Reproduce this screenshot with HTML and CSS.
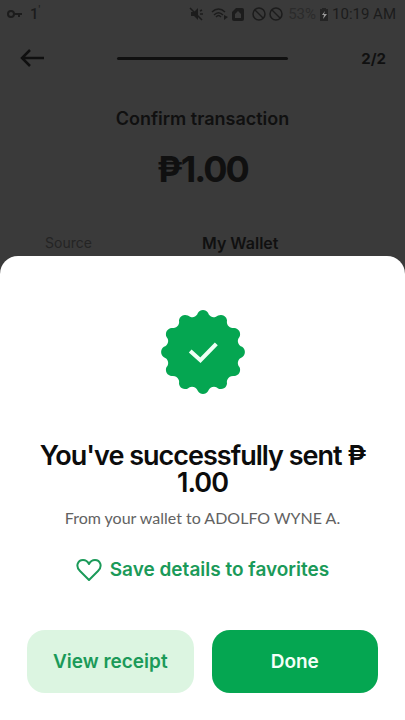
FILE: index.html
```html
<!DOCTYPE html>
<html lang="en">
<head>
<meta charset="utf-8">
<meta name="viewport" content="width=device-width, initial-scale=1">
<title>Confirm transaction</title>
<link rel="stylesheet" href="styles.css">
</head>
<body>
<div class="status-bar">
  <div class="status-group">
    <svg width="16" height="12" viewBox="0 0 16 12" fill="none" stroke="currentColor" stroke-width="2"><circle cx="4" cy="6" r="3"/><path d="M7 6h8M12 6v3"/></svg>
    <span class="network">1<sup>'</sup></span>
  </div>
  <div class="status-group status-right">
    <svg width="14" height="14" viewBox="0 0 14 14"><path d="M2 5h3l4-4v12L5 9H2z" fill="currentColor"/><path d="M1 1l12 12M11 4l2-1M11 7h3" stroke="currentColor" stroke-width="1.5"/></svg>
    <svg class="wifi" width="17" height="14" viewBox="0 0 17 14" fill="none" stroke="currentColor" stroke-width="1.5"><path d="M1 5c4-4 9-4 13 0M3 8c3-3 6-3 9 0M5 10c2-2 3-2 5 0"/><path d="M13 8l4 2-4 3z" fill="currentColor" stroke="none"/></svg>
    <svg width="12" height="14" viewBox="0 0 12 14"><path fill="currentColor" fill-rule="evenodd" d="M4 1h6a2 2 0 0 1 2 2v9a2 2 0 0 1-2 2H2a2 2 0 0 1-2-2V5zM3 7v4h6V7L6 4z"/></svg>
    <svg class="blocked" width="32" height="14" viewBox="0 0 32 14" fill="none" stroke="currentColor" stroke-width="1.5"><circle cx="7" cy="7" r="6"/><path d="M3 3l8 8"/><circle cx="24" cy="7" r="6"/><path d="M20 3l8 8"/></svg>
    <span class="percent">53%</span>
    <svg class="battery" width="8" height="13" viewBox="0 0 8 13"><path d="M2 0h4v1h2v12H0V1h2z" fill="#242424"/><path d="M5 3L2 7h2l-1 4 4-5H4z" fill="#999"/></svg>
    <time>10:19 AM</time>
  </div>
</div>
<header class="top-bar">
  <button class="back" type="button" aria-label="Back">
    <svg width="26" height="20" viewBox="0 0 26 20" fill="none" stroke="currentColor" stroke-width="2.500"><path d="M25 10H3M11 2l-8 8 8 8"/></svg>
  </button>
  <div class="progress"></div>
  <span class="step">2/2</span>
</header>
<main class="summary">
  <h1>Confirm transaction</h1>
  <p class="amount">₱1.00</p>
  <dl class="details">
    <dt>Source</dt>
    <dd>My Wallet</dd>
  </dl>
</main>
<section class="sheet" role="dialog" aria-labelledby="sent-title">
  <svg class="seal" width="84" height="84" viewBox="-41 -41 82 82">
    <path fill="#05a651" d="M-5.02-38.17A6 6 0 0 1 5.02-38.17A6 6 0 0 0 14.73-35.57A6 6 0 0 1 23.44-30.54A6 6 0 0 0 30.54-23.44A6 6 0 0 1 35.57-14.73A6 6 0 0 0 38.17-5.02A6 6 0 0 1 38.17 5.02A6 6 0 0 0 35.57 14.73A6 6 0 0 1 30.54 23.44A6 6 0 0 0 23.44 30.54A6 6 0 0 1 14.73 35.57A6 6 0 0 0 5.02 38.17A6 6 0 0 1-5.02 38.17A6 6 0 0 0-14.73 35.57A6 6 0 0 1-23.44 30.54A6 6 0 0 0-30.54 23.44A6 6 0 0 1-35.57 14.73A6 6 0 0 0-38.17 5.02A6 6 0 0 1-38.17-5.02A6 6 0 0 0-35.57-14.73A6 6 0 0 1-30.54-23.44A6 6 0 0 0-23.44-30.54A6 6 0 0 1-14.73-35.57A6 6 0 0 0-5.02-38.17Z"/>
    <path d="M-12.500-1L-2.500 8 13-8" fill="none" stroke="#eefff5" stroke-width="4"/>
  </svg>
  <h2 id="sent-title">You've successfully sent ₱ 1.00</h2>
  <p class="recipient">From your wallet to ADOLFO WYNE A.</p>
  <button class="favorite" type="button">
    <svg width="26" height="22" viewBox="0 0 26 22" fill="none" stroke="currentColor" stroke-width="2" stroke-linejoin="round"><path d="M13 21L4 12C-1 7 2 1 7 1c3 0 5 2 6 4 1-2 3-4 6-4 5 0 8 6 3 11z"/></svg>
    Save details to favorites
  </button>
  <div class="actions">
    <button class="secondary" type="button">View receipt</button>
    <button class="primary" type="button">Done</button>
  </div>
</section>
</body>
</html>
```

FILE: styles.css
```css
* { box-sizing: border-box; }

body {
  margin: 0;
  min-height: 100vh;
  background: #3a3a3a;
  color: #101010;
  font-family: Inter, "Liberation Sans", sans-serif;
}

h1, h2, p, dl, dd { margin: 0; }

button {
  padding: 0;
  border: 0;
  background: none;
  color: inherit;
  font: inherit;
}

svg { display: block; flex: none; }

.status-bar {
  display: flex;
  justify-content: space-between;
  height: 28px;
  padding: 0 9px 0 7px;
  color: #1c1c1c;
  font-family: Roboto, sans-serif;
  font-size: 15px;
}

.status-group { display: flex; align-items: center; gap: 7px; }
.status-right { gap: 4px; }
.network { font-weight: 500; }
.network sup { font-size: 10px; line-height: 0; }
.wifi { margin-left: 4px; }
.blocked { margin-left: 4px; }
.percent { color: #2b2b2b; }

.top-bar {
  display: grid;
  grid-template-columns: 1fr 171px 1fr;
  align-items: center;
  height: 60px;
  padding: 0 19px;
}

.back { justify-self: start; }
.progress { height: 3px; border-radius: 2px; background: #101010; }
.step { justify-self: end; font-size: 15px; font-weight: 700; }

.summary {
  display: flex;
  flex-direction: column;
  align-items: center;
  padding: 20px 20px 0;
}

h1 { font-size: 18px; line-height: 22px; font-weight: 600; }
.amount { margin-top: 19px; font-size: 36px; line-height: 40px; font-weight: 700; letter-spacing: -2px; }

.details {
  display: grid;
  grid-template-columns: 157px 1fr;
  align-items: center;
  align-self: stretch;
  margin-top: 42px;
  padding: 0 25px;
  line-height: 24px;
}

.details dt { color: #242424; font-size: 14px; }
.details dd { font-size: 16px; font-weight: 600; }

.sheet {
  position: fixed;
  right: 0;
  bottom: 0;
  left: 0;
  display: flex;
  flex-direction: column;
  align-items: center;
  padding: 54px 27px 27px;
  border-radius: 18px 18px 0 0;
  background: #fff;
  text-align: center;
}

h2 {
  margin-top: 48px;
  color: #0c0c0c;
  font-size: 27px;
  line-height: 27px;
  font-weight: 600;
  letter-spacing: -1px;
}

.recipient {
  margin-top: 12px;
  color: #626262;
  font-family: Lato, sans-serif;
  font-size: 16px;
  line-height: 20px;
}

.favorite {
  display: flex;
  align-items: center;
  gap: 8px;
  margin-top: 30px;
  color: #1b9a59;
  font-size: 19px;
  line-height: 24px;
  font-weight: 600;
}

.actions {
  display: grid;
  grid-template-columns: 1fr 1fr;
  gap: 18px;
  align-self: stretch;
  margin-top: 48px;
}

.actions button {
  height: 63px;
  border-radius: 18px;
  font-size: 19px;
  font-weight: 600;
}

.secondary { background: #dcf5e1; color: #1b9a59; }
.primary { background: #05a651; color: #f4fff8; }
```
